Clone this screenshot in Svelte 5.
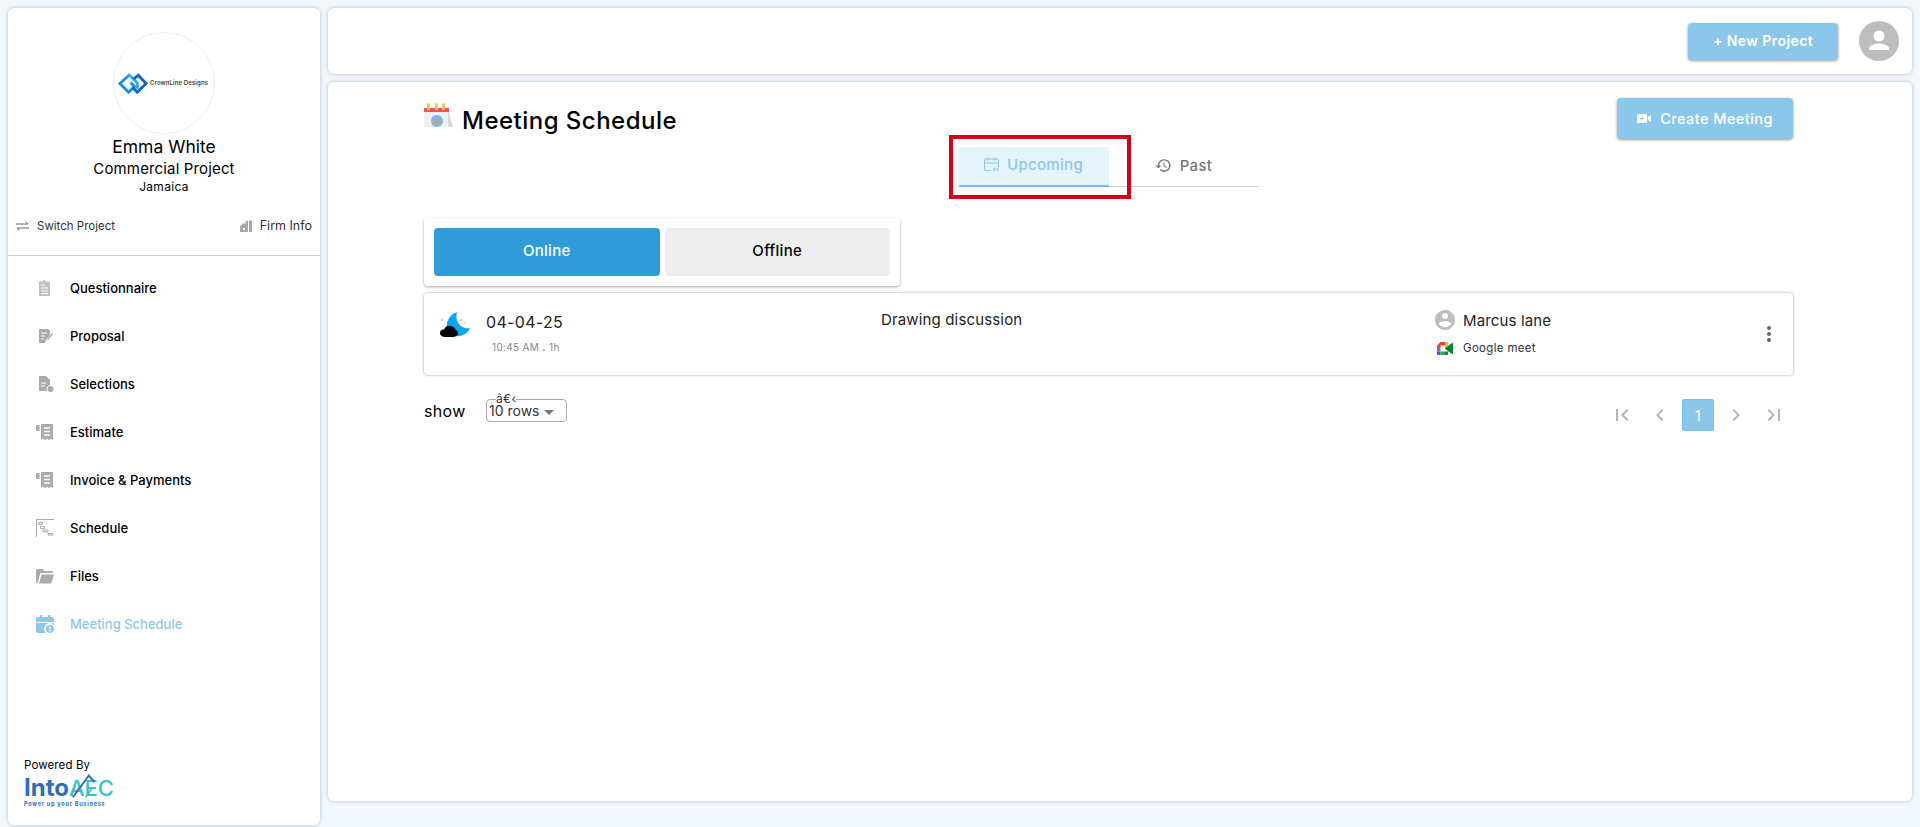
<script lang="ts">
  const navItems = [
    { label: 'Questionnaire', icon: 'clipboard' },
    { label: 'Proposal', icon: 'proposal' },
    { label: 'Selections', icon: 'selection' },
    { label: 'Estimate', icon: 'receipt' },
    { label: 'Invoice & Payments', icon: 'receipt' },
    { label: 'Schedule', icon: 'gantt' },
    { label: 'Files', icon: 'folder' },
    { label: 'Meeting Schedule', icon: 'calendar', active: true }
  ];

  const accountPath =
    'M12 2C6.48 2 2 6.48 2 12s4.48 10 10 10 10-4.48 10-10S17.52 2 12 2zm0 3c1.66 0 3 1.34 3 3s-1.34 3-3 3-3-1.34-3-3 1.34-3 3-3zm0 14.2c-2.5 0-4.71-1.28-6-3.22.03-1.99 4-3.08 6-3.08 1.99 0 5.97 1.09 6 3.08-1.29 1.94-3.5 3.22-6 3.22z';
</script>

<div class="page">
  <aside class="sidebar">
    <div class="profile">
      <div class="logo-circle">
        <svg class="crown-mark" viewBox="0 0 32 25" fill="none" stroke-width="3">
          <path d="M13 3.500 3 12.500l9 9 6-6-4-4" stroke="#1f8fe0" />
          <path d="M12 3l9 9v6" stroke="#27b4ee" />
          <path d="M17 8l5-4 8 8.500-9 9-5-5" stroke="#1565c9" />
        </svg>
        <span class="crown-text">CrownLine Designs</span>
      </div>
      <div class="name">Emma White</div>
      <div class="project">Commercial Project</div>
      <div class="place">Jamaica</div>
    </div>

    <div class="quick-links">
      <span class="quick switch">
        <svg width="13" height="10" viewBox="0 0 13 10" fill="none" stroke="#666" stroke-width="1">
          <path d="M0 3h12M9.500 .7 12 3M13 7H1M3.500 9.300 1 7" />
        </svg>
        Switch Project
      </span>
      <span class="quick firm">
        <svg width="12" height="12" viewBox="0 0 12 12" fill="#a8a8a8">
          <path d="M0 6l4-3 1.500 1V1.500L8 .5V12H0z M9 .5h3V12H9z" />
          <rect x="3" y="8" width="2" height="2" fill="#fff" />
        </svg>
        Firm Info
      </span>
    </div>

    <nav class="nav">
      {#each navItems as item}
        <div class="nav-item" class:active={item.active}>
          <svg class="nav-icon" viewBox="0 0 18 18" fill="currentColor">
            {#if item.icon === 'clipboard'}
              <path d="M3 2.500h3.500L8 .5l2 2h2.500L14 4v13H3z" opacity=".75" />
              <path d="M5 6h4M5 9h7M5 12h7M5 14.500h7" stroke="#fff" stroke-width="1" />
            {:else if item.icon === 'proposal'}
              <path d="M3 2h9l2 2v4l-4 5-1 3H3z" />
              <path d="M5 6h6M5 9h4M5 12h3" stroke="#fff" stroke-width="1" />
              <path d="M11 12l5-6 1 1-5 6z" />
            {:else if item.icon === 'selection'}
              <path d="M3 1h7l4 4v5a4 4 0 0 0-3 6H3z" />
              <path d="M5 8h5M5 11h4" stroke="#fff" stroke-width="1" />
              <circle cx="14.500" cy="14" r="3" />
            {:else if item.icon === 'receipt'}
              <path d="M5 1h12v16l-2-1.300-2 1.300-2-1.300-2 1.300-2-1.300-2 1.300z" />
              <path d="M0 2h3.500v6H1.500A1.500 1.500 0 0 1 0 6.500z" />
              <path d="M8 5h6M8 8.500h6M8 12h6" stroke="#fff" stroke-width="1.400" />
            {:else if item.icon === 'gantt'}
              <path d="M.5 18V.5H18" fill="none" stroke="currentColor" />
              <path d="M2.500 3.500h4v2h-4zM4.500 7.500h4v2h-4zM7 11h5v1.800H7zM12 14.500h5v1.500h-5z" fill="none" stroke="currentColor" stroke-width="1" />
            {:else if item.icon === 'folder'}
              <path d="M0 3.500A1.500 1.500 0 0 1 1.500 2h5l2 2h7A1.500 1.500 0 0 1 17 5.500V6H4.500L1.500 16H1.200A1.200 1.200 0 0 1 0 14.800z" />
              <path d="M5.500 7.500H18l-2.500 8.200a1 1 0 0 1-1 .8H3z" />
            {:else}
              <path d="M4 0h2v2h6V0h2v2h2a2 2 0 0 1 2 2v3H0V4a2 2 0 0 1 2-2h2z" />
              <path d="M0 8h18v1.800A5 5 0 0 0 9.800 18H2a2 2 0 0 1-2-2z" />
              <circle cx="14" cy="14" r="4" />
              <circle cx="14" cy="12.800" r="1.200" fill="#fff" />
              <path d="M11.800 16.300c.500-1.400 3.900-1.400 4.400 0z" fill="#fff" />
            {/if}
          </svg>
          <span>{item.label}</span>
        </div>
      {/each}
    </nav>

    <div class="powered">
      <div class="powered-label">Powered By</div>
      <div class="into-logo">
        <span class="into">Into</span><span class="aec">AEC</span>
        <svg class="into-roof" viewBox="0 0 40 30" fill="none">
          <path d="M1 29 21 2l7 8" stroke="#2f6db5" stroke-width="2.400" />
          <path d="M17 29 24 19" stroke="#3cc1c9" stroke-width="2.400" />
        </svg>
        <div class="tagline">Power up your Business</div>
      </div>
    </div>
  </aside>

  <div class="content">
    <header class="topbar">
      <button class="primary new-project">+ New Project</button>
      <svg class="user" viewBox="0 0 40 40">
        <circle cx="20" cy="20" r="20" fill="#bdbdbd" />
        <circle cx="20" cy="15" r="5.500" fill="#fff" />
        <path d="M10 29v-1.500c0-3.500 6.500-5 10-5s10 1.500 10 5V29z" fill="#fff" />
      </svg>
    </header>

    <main class="main">
      <div class="inner">
        <div class="title-row">
          <div class="title">
            <svg class="title-icon" viewBox="0 0 29 24">
              <path d="M0 6h24v18H0z" fill="#f0f0f0" />
              <path d="M24 6l5 18h-5z" fill="#d9d9d9" />
              <path d="M0 5h25v4H0z" fill="#f25555" />
              <rect x="3" y="0" width="3" height="7" rx="1.500" fill="#fdbb5c" />
              <rect x="11" y="0" width="3" height="7" rx="1.500" fill="#fdbb5c" />
              <rect x="18" y="0" width="3" height="7" rx="1.500" fill="#fdbb5c" />
              <circle cx="13" cy="18" r="6" fill="#7db8ee" />
              <path d="M10 18l2.500 2.500 4-5" fill="none" stroke="#f39b2d" stroke-width="1.800" />
            </svg>
            <h1>Meeting Schedule</h1>
          </div>
          <button class="primary create">
            <svg width="14" height="9" viewBox="0 0 14 9" fill="#fff">
              <rect width="10" height="9" rx="1" />
              <path d="M11 3l3-2v7l-3-2z" />
              <path d="M5 2.500v4M3 4.500h4" stroke="#8bc7eb" stroke-width="1" />
            </svg>
            Create Meeting
          </button>
        </div>

        <div class="tabs">
          <div class="tab selected">
            <svg width="15" height="15" viewBox="0 0 15 15" fill="none" stroke="currentColor" stroke-width="1.100">
              <path d="M7 13.500H2A1.500 1.500 0 0 1 .5 12V3.500A1.500 1.500 0 0 1 2 2h11a1.500 1.500 0 0 1 1.500 1.500V10M.5 6h14M4 .5v3M11 .5v3" />
              <path d="M9.500 11l1.500 1.500L9.500 14M12.500 11l1.500 1.500-1.500 1.500" />
            </svg>
            Upcoming
            <span class="annotation"></span>
          </div>
          <div class="tab">
            <svg width="17" height="17" viewBox="0 0 24 24" fill="#757575">
              <path d="M13 3c-4.970 0-9 4.030-9 9H1l3.890 3.890.070.140L9 12H6c0-3.870 3.130-7 7-7s7 3.130 7 7-3.130 7-7 7c-1.930 0-3.680-.790-4.940-2.060l-1.420 1.420C8.270 19.990 10.510 21 13 21c4.970 0 9-4.030 9-9s-4.030-9-9-9zm-1 5v5l4.280 2.540.720-1.210-3.500-2.080V8H12z" />
            </svg>
            Past
          </div>
        </div>

        <div class="mode-card">
          <button class="mode on">Online</button>
          <button class="mode">Offline</button>
        </div>

        <div class="meeting">
          <div class="when">
            <svg class="moon" viewBox="0 0 30 28">
              <path d="M17 0C8 3 4 14 9 20c5 7 17 5 21-4C22 18 14 10 17 0z" fill="#0aa6f2" />
              <path d="M0 21c0-2.500 2-4 4-3.500C5 14.500 8 13 11 14c2.500 .5 4 2 4.500 4 1.500 .5 2.500 1.500 2.500 3 0 2.500-2.500 4-6 4H6c-3.500 0-6-1.500-6-4z" fill="#000" />
              <circle cx="2" cy="8" r="1" fill="#f5b547" />
              <circle cx="21" cy="8" r="1" fill="#f5b547" />
              <circle cx="25" cy="11" r=".8" fill="#f5b547" />
            </svg>
            <div>
              <div class="date">04-04-25</div>
              <div class="time">10:45 AM <b>.</b> 1h</div>
            </div>
          </div>
          <div class="subject">Drawing discussion</div>
          <div class="host">
            <div class="host-line">
              <svg class="host-avatar" viewBox="2 2 20 20" fill="#bdbdbd"><path d={accountPath} /></svg>
              <span class="host-name">Marcus lane</span>
            </div>
            <div class="host-line meet-line">
              <svg class="meet" viewBox="0 0 16 13">
                <path d="M3.500 0H8v3.500H3.500V7H0V3.500z" fill="#ea4335" />
                <path d="M8 0h2a1 1 0 0 1 1 1v5.500H8V3.500z" fill="#fbbc04" />
                <path d="M0 7h3.500v2.500H0z" fill="#4285f4" />
                <path d="M0 9.500h3.500V13H1.200A1.200 1.200 0 0 1 0 11.800z" fill="#1967d2" />
                <path d="M3.500 9.500H8V13H3.500z" fill="#34a853" />
                <path d="M8 9.500h3V12a1 1 0 0 1-1 1H8z" fill="#188038" />
                <path d="M8 6.500 11 4l5-3.500v12L11 9z" fill="#00832d" />
              </svg>
              <span class="meet-name">Google meet</span>
            </div>
          </div>
          <svg class="more" viewBox="0 0 24 24" fill="#666">
            <path d="M12 8c1.100 0 2-.900 2-2s-.900-2-2-2-2 .900-2 2 .900 2 2 2zm0 2c-1.100 0-2 .900-2 2s.900 2 2 2 2-.900 2-2-.900-2-2-2zm0 6c-1.100 0-2 .900-2 2s.900 2 2 2 2-.900 2-2-.900-2-2-2z" />
          </svg>
        </div>

        <div class="footer">
          <div class="rows">
            <span class="show">show</span>
            <fieldset class="select">
              <legend>â€‹</legend>
              <span class="select-value">10 rows</span>
              <span class="caret"></span>
            </fieldset>
          </div>
          <div class="pager">
            <svg viewBox="0 0 24 24"><path d="M18.410 16.590L13.820 12l4.590-4.590L17 6l-6 6 6 6zM6 6h2v12H6z" /></svg>
            <svg viewBox="0 0 24 24"><path d="M15.410 7.410L14 6l-6 6 6 6 1.410-1.410L10.830 12z" /></svg>
            <span class="page-no">1</span>
            <svg viewBox="0 0 24 24"><path d="M10 6L8.590 7.410 13.170 12l-4.580 4.590L10 18l6-6z" /></svg>
            <svg viewBox="0 0 24 24"><path d="M5.590 7.410L10.180 12l-4.590 4.590L7 18l6-6-6-6zM16 6h2v12h-2z" /></svg>
          </div>
        </div>
      </div>
    </main>
  </div>
</div>

<style>
  :global(body) {
    margin: 0;
    background: #f3f8fd;
    font-family: Inter, "Open Sans", sans-serif;
    letter-spacing: 0.02em;
    color: #000;
  }

  .page {
    display: grid;
    grid-template-columns: 312px 1584px;
    gap: 8px;
    padding: 8px;
    height: 827px;
    box-sizing: border-box;
    overflow: hidden;
  }

  .sidebar,
  .topbar,
  .main {
    background: #fff;
    border-radius: 6px;
    box-shadow: 0 0 4px rgba(80, 100, 130, 0.4);
  }

  .sidebar {
    display: flex;
    flex-direction: column;
    height: 817px;
  }

  .profile {
    display: flex;
    flex-direction: column;
    align-items: center;
    padding-top: 24px;
  }

  .logo-circle {
    width: 102px;
    height: 102px;
    border: 1px solid #eee;
    border-radius: 50%;
    box-sizing: border-box;
    display: flex;
    align-items: center;
    gap: 2px;
    padding-left: 3px;
  }

  .crown-mark {
    width: 31px;
    height: 25px;
    flex: none;
  }

  .crown-text {
    font-size: 6px;
    font-weight: 600;
    color: #444;
    white-space: nowrap;
    letter-spacing: 0.02em;
    margin-bottom: 1px;
  }

  .name {
    font-size: 17.500px;
    line-height: 25px;
    letter-spacing: 0;
  }

  .project {
    font-size: 15px;
    line-height: 20px;
    letter-spacing: 0.01em;
  }

  .place {
    font-size: 12px;
    line-height: 16px;
  }

  .quick-links {
    display: flex;
    justify-content: space-between;
    align-items: center;
    padding: 23px 8px 21px;
    border-bottom: 1px solid #d0d0d0;
    font-size: 11.500px;
    line-height: 16px;
    letter-spacing: 0;
    color: #333;
  }

  .quick {
    display: flex;
    align-items: center;
    gap: 8px;
  }

  .firm {
    font-size: 12.500px;
  }

  .nav {
    display: flex;
    flex-direction: column;
    padding-top: 8px;
  }

  .nav-item {
    display: flex;
    align-items: center;
    gap: 16px;
    height: 48px;
    padding-left: 28px;
    font-size: 13px;
    font-weight: 500;
    letter-spacing: 0;
    color: #000;
  }

  .nav-icon {
    width: 18px;
    height: 18px;
    color: #ababab;
    flex: none;
  }

  .active,
  .active .nav-icon {
    color: #8cc8ec;
  }

  .powered {
    margin-top: auto;
    padding: 0 0 16px 16px;
  }

  .powered-label {
    font-size: 11.500px;
    line-height: 16px;
    letter-spacing: 0.01em;
  }

  .into-logo {
    position: relative;
    width: 96px;
    height: 34px;
    line-height: 26px;
    margin-top: 2px;
    font-size: 24px;
    font-weight: 700;
    letter-spacing: 0;
    white-space: nowrap;
  }

  .into {
    color: #2f6db5;
  }

  .aec {
    color: #3cc1c9;
    font-weight: 500;
    font-size: 22px;
  }

  .into-roof {
    position: absolute;
    left: 48px;
    top: -3px;
    width: 32px;
    height: 28px;
  }

  .tagline {
    font-size: 5.500px;
    line-height: 7px;
    font-weight: 700;
    color: #2f6db5;
    letter-spacing: 0.14em;
  }

  .content {
    display: flex;
    flex-direction: column;
    gap: 8px;
  }

  .topbar {
    height: 66px;
    display: flex;
    align-items: center;
    justify-content: flex-end;
    gap: 21px;
    padding-right: 13px;
    box-sizing: border-box;
    flex: none;
  }

  .user {
    width: 40px;
    height: 40px;
  }

  .primary {
    border: 0;
    border-radius: 4px;
    background: #8bc7eb;
    color: #fff;
    font-family: inherit;
    letter-spacing: 0.03em;
    font-weight: 600;
    box-shadow: 0 1px 3px rgba(0, 0, 0, 0.4);
    display: flex;
    align-items: center;
    justify-content: center;
  }

  .new-project {
    width: 150px;
    height: 37px;
    padding-bottom: 2px;
    font-size: 14px;
  }

  .create {
    width: 176px;
    height: 41px;
    font-size: 14.500px;
    font-weight: 500;
    gap: 9px;
    padding-left: 6px;
  }

  .main {
    height: 719px;
    padding: 16px 119px 0 96px;
    box-sizing: border-box;
  }

  .inner {
    display: flex;
    flex-direction: column;
  }

  .title-row {
    display: flex;
    justify-content: space-between;
    align-items: flex-start;
    height: 41px;
  }

  .title {
    display: flex;
    align-items: flex-start;
    gap: 9px;
    padding-top: 5px;
  }

  .title-icon {
    width: 29px;
    height: 24px;
  }

  h1 {
    margin: 0;
    font-size: 24px;
    line-height: 36px;
    font-weight: 500;
    letter-spacing: 0.02em;
  }

  .tabs {
    display: flex;
    align-self: center;
    width: 300px;
    height: 40px;
    margin-top: 8px;
    border-bottom: 1px solid #cfcfcf;
    box-sizing: border-box;
  }

  .tab {
    position: relative;
    width: 150px;
    display: flex;
    align-items: center;
    justify-content: center;
    gap: 8px;
    padding-bottom: 3px;
    font-size: 15px;
    font-weight: 500;
    color: #777;
    box-sizing: border-box;
  }

  .selected {
    background: #e5f3fb;
    color: #8cc8ec;
    border-bottom: 2px solid #79bde3;
    height: 40px;
  }

  .annotation {
    position: absolute;
    left: -10px;
    top: -12px;
    width: 182px;
    height: 64px;
    border: 4px solid #d0021b;
    box-sizing: border-box;
    pointer-events: none;
  }

  .mode-card {
    display: flex;
    gap: 5px;
    align-self: flex-start;
    width: 476px;
    height: 68px;
    padding: 10px;
    margin-top: 31px;
    box-sizing: border-box;
    background: #fff;
    border-radius: 4px;
    box-shadow: 0 1px 3px rgba(0, 0, 0, 0.35);
  }

  .mode {
    flex: 1;
    border: 0;
    border-radius: 4px;
    background: #efefef;
    font-family: inherit;
    letter-spacing: 0.02em;
    padding: 0 0 3px;
    font-size: 15px;
    font-weight: 500;
    color: #000;
  }

  .on {
    background: #2f9bd9;
    color: #fff;
  }

  .meeting {
    display: grid;
    grid-template-columns: 440px 555px 1fr auto;
    height: 82px;
    margin-top: 7px;
    padding-left: 16px;
    box-sizing: border-box;
    border-radius: 4px;
    box-shadow: 0 0 3px rgba(0, 0, 0, 0.38);
  }

  .when {
    display: flex;
    gap: 16px;
    padding-top: 19px;
  }

  .moon {
    width: 30px;
    height: 28px;
  }

  .date {
    font-size: 16px;
    line-height: 20px;
    color: #222;
  }

  .time {
    font-size: 10px;
    line-height: 14px;
    margin: 8px 0 0 6px;
    color: #888;
  }

  .subject {
    font-size: 15px;
    line-height: 20px;
    letter-spacing: 0.01em;
    padding: 17px 0 0 1px;
    color: #222;
  }

  .host {
    padding-top: 17px;
  }

  .host-line {
    display: flex;
    align-items: center;
    gap: 8px;
  }

  .host-avatar {
    width: 20px;
    height: 20px;
  }

  .host-name {
    font-size: 15px;
    letter-spacing: 0.01em;
    color: #222;
  }

  .meet-line {
    margin-top: 11px;
    padding-left: 2px;
    gap: 10px;
  }

  .meet {
    width: 16px;
    height: 13px;
  }

  .meet-name {
    font-size: 11.500px;
    color: #333;
  }

  .more {
    width: 24px;
    height: 24px;
    margin: 29px 12px 0 0;
  }

  .footer {
    display: flex;
    justify-content: space-between;
    margin-top: 24px;
  }

  .rows {
    display: flex;
    align-items: flex-start;
  }

  .show {
    width: 62px;
    font-size: 16px;
    line-height: 24px;
  }

  .select {
    position: relative;
    width: 81px;
    height: 29px;
    margin: -6px 0 0;
    padding: 0 0 0 2px;
    border: 1px solid #aaa;
    border-radius: 4px;
    box-sizing: border-box;
    font-size: 14px;
    color: #333;
  }

  .select legend {
    font-size: 12px;
    line-height: 12px;
    padding: 0;
    margin-left: 7px;
    white-space: nowrap;
  }

  .select-value {
    line-height: 14px;
    display: block;
    margin-top: -1px;
    letter-spacing: 0;
  }

  .caret {
    position: absolute;
    right: 12px;
    top: 5px;
    border: 5px solid transparent;
    border-top-color: #777;
    border-bottom: 0;
  }

  .pager {
    display: flex;
    align-items: center;
    gap: 14px;
    padding-right: 7px;
  }

  .pager svg {
    width: 24px;
    height: 24px;
    fill: #b5b5b5;
  }

  .page-no {
    width: 32px;
    height: 32px;
    margin: 0 -4px;
    border: 1px solid #79bde3;
    border-radius: 2px;
    background: #8bc7eb;
    color: #fff;
    font-size: 14px;
    display: flex;
    align-items: center;
    justify-content: center;
    box-sizing: border-box;
  }
</style>
